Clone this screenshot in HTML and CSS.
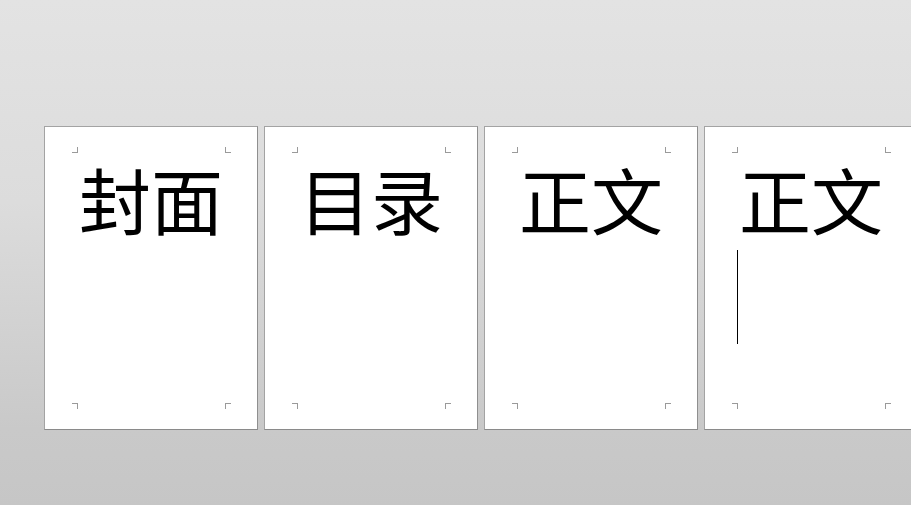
FILE: index.html
```html
<!DOCTYPE html>
<html lang="zh">
<head>
<meta charset="utf-8">
<link rel="stylesheet" href="styles.css">
</head>
<body>
<div class="strip">
  <div class="page">
    <span class="mark tl"></span><span class="mark tr"></span><span class="mark bl"></span><span class="mark br"></span>
    <p class="title">封面</p>
  </div>
  <div class="page">
    <span class="mark tl"></span><span class="mark tr"></span><span class="mark bl"></span><span class="mark br"></span>
    <p class="title">目录</p>
  </div>
  <div class="page">
    <span class="mark tl"></span><span class="mark tr"></span><span class="mark bl"></span><span class="mark br"></span>
    <p class="title">正文</p>
  </div>
  <div class="page">
    <span class="mark tl"></span><span class="mark tr"></span><span class="mark bl"></span><span class="mark br"></span>
    <p class="title">正文</p>
    <div class="caret"></div>
  </div>
</div>
</body>
</html>
```
FILE: styles.css
```css
html, body {
  margin: 0;
  height: 100%;
}
body {
  background: linear-gradient(to bottom, #e3e3e3 0%, #dcdcdc 40%, #c9c9c9 85%, #c6c6c6 100%);
  overflow: hidden;
  font-family: "Noto Sans CJK SC", "Noto Sans", sans-serif;
}
.strip {
  display: flex;
  gap: 6px;
  padding: 126px 0 0 44px;
  overflow: hidden;
}
.page {
  position: relative;
  flex: 0 0 auto;
  box-sizing: border-box;
  width: 214px;
  height: 304px;
  background: #fff;
  border: 1px solid #a3a3a3;
  border-right-color: #8f8f8f;
  border-bottom-color: #8a8a8a;
  padding: 24px 32px 25px 32px;
}
.title {
  margin: 0;
  font-size: 72px;
  line-height: 94px;
  font-weight: 400;
  color: #000;
  text-align: center;
  white-space: nowrap;
}
.caret {
  width: 1px;
  height: 94px;
  margin-top: 5px;
  background: #000;
}
.mark {
  position: absolute;
  width: 5px;
  height: 5px;
  border-color: #9a9a9a;
  border-style: solid;
  border-width: 0;
}
.mark.tl { left: 27px; top: 20px; border-right-width: 1px; border-bottom-width: 1px; }
.mark.tr { right: 26px; top: 20px; border-left-width: 1px; border-bottom-width: 1px; }
.mark.bl { left: 27px; bottom: 20px; border-right-width: 1px; border-top-width: 1px; }
.mark.br { right: 26px; bottom: 20px; border-left-width: 1px; border-top-width: 1px; }
```
